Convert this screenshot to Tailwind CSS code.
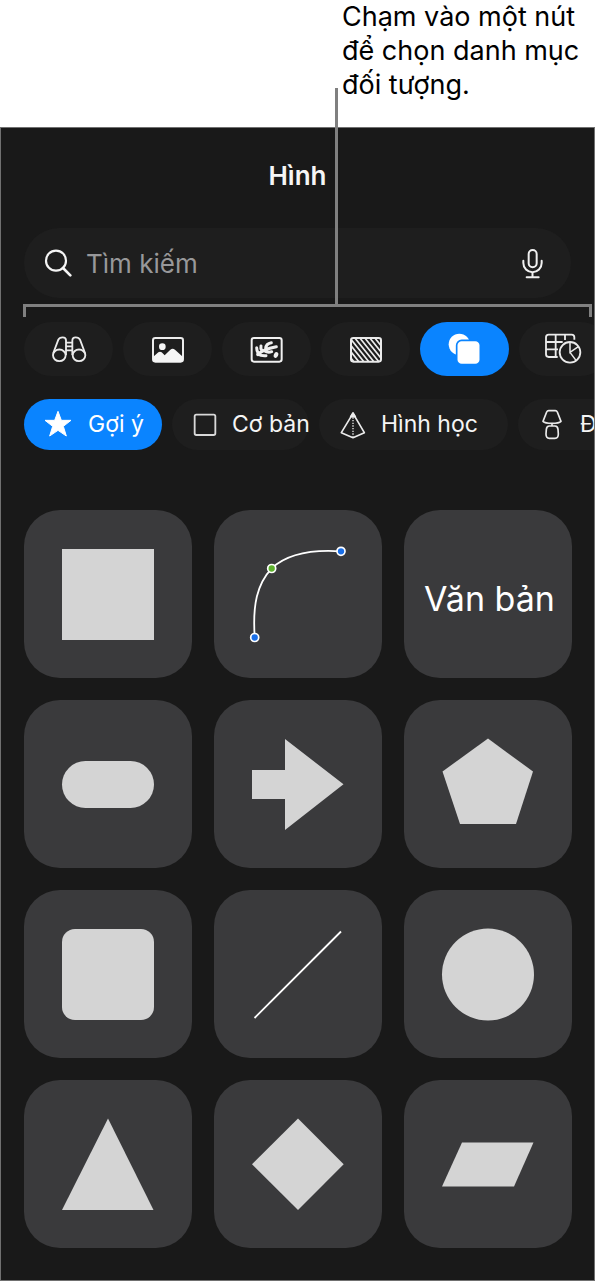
<!DOCTYPE html>
<html lang="vi">
<head>
<meta charset="utf-8">
<meta name="viewport" content="width=device-width, initial-scale=1">
<title>Hình</title>
<script src="https://cdn.jsdelivr.net/npm/@tailwindcss/browser@4"></script>
</head>
<body class="bg-white font-['Inter','Noto_Sans',sans-serif] text-[#f5f5f5]">
<div class="relative pb-px">
  <p class="mb-[25px] pl-[342px] text-[27px] leading-[34px] text-black whitespace-nowrap">Chạm vào một nút<br>để chọn danh mục<br>đối tượng.</p>

  <main class="mr-px overflow-hidden border border-[#707070] bg-[#191919] pt-8 pb-8">
    <h1 class="text-center text-[26px] leading-8 font-semibold">Hình</h1>

    <div class="mx-[23px] mt-9 flex h-[70px] items-center gap-[14px] rounded-full bg-[#1e1e1e] pr-[25px] pl-5">
      <svg class="h-8 w-7 shrink-0" viewBox="132 79 84 96" fill="none" stroke="#f5f5f5" aria-hidden="true"><circle cx="168" cy="120" r="30" stroke-width="6.500"/><path d="M189 142l22 22" stroke-width="8" stroke-linecap="round"/></svg>
      <input type="search" aria-label="Tìm kiếm" placeholder="Tìm kiếm" class="min-w-0 flex-1 bg-transparent pt-px text-[26px] leading-8 outline-none placeholder:text-[#98989a]">
      <button type="button" aria-label="Đọc chính tả" class="shrink-0">
        <svg class="block h-8 w-7" viewBox="665 80 84 96" fill="none" stroke="#f0f0f0" stroke-width="6" stroke-linecap="round" aria-hidden="true"><rect x="697" y="89" width="24" height="52" rx="12"/><path d="M681 121v7a27.500 27.500 0 0 0 55 0v-7M708.500 156v14M691 171h36"/></svg>
      </button>
    </div>

    <nav aria-label="Danh mục đối tượng" class="mt-6 ml-[23px] flex gap-[10px]">
      <button type="button" aria-label="Tất cả" class="flex h-[54px] w-[89px] shrink-0 items-center justify-center rounded-full bg-[#1e1e1e]">
        <svg class="h-8 w-10" viewBox="98 55 120 96" fill="none" stroke="#ebebeb" stroke-width="5.500" aria-hidden="true"><ellipse cx="129" cy="122" rx="19" ry="17.500"/><ellipse cx="188" cy="122" rx="19" ry="17.500"/><path d="M111 115l15-40q3-7 13-7 10 0 10 9v44M206 115l-15-40q-3-7-13-7-10 0-10 9v44M149 84h19M149 95h19M149 107h19"/></svg>
      </button>
      <button type="button" aria-label="Ảnh" class="flex h-[54px] w-[89px] shrink-0 items-center justify-center rounded-full bg-[#1e1e1e]">
        <svg class="h-8 w-10" viewBox="394 55 120 96" aria-hidden="true"><rect x="409" y="70" width="90" height="71" rx="7" fill="none" stroke="#ebebeb" stroke-width="6"/><circle cx="437" cy="96" r="10" fill="#f5f5f5"/><path fill="#f5f5f5" d="M409 127l16-14q5-4 10 0l9 9 17-17q7-6 14 0l24 22v9q0 6-7 6h-76q-7 0-7-6z"/></svg>
      </button>
      <button type="button" aria-label="Minh họa" class="flex h-[54px] w-[89px] shrink-0 items-center justify-center rounded-full bg-[#1e1e1e]">
        <svg class="h-8 w-10" viewBox="110 55 120 96" fill="none" stroke="#f0f0f0" stroke-linecap="round" aria-hidden="true"><rect x="124" y="70" width="90" height="71" rx="7" stroke-width="6"/><path stroke-width="9" d="M142 120q14-16 56-24M142 118q10 6 25 5M143 114q-4-7-4-15M155 108q-5-7-3-14M166 101q1-14 17-17M162 108q10 7 22 3"/><ellipse cx="197" cy="121" rx="6.500" ry="9" transform="rotate(22 197 121)" fill="#f0f0f0" stroke="none"/></svg>
      </button>
      <button type="button" aria-label="Hoa văn" class="flex h-[54px] w-[89px] shrink-0 items-center justify-center rounded-full bg-[#1e1e1e]">
        <svg class="h-8 w-10" viewBox="406 55 120 96" fill="none" stroke="#ebebeb" aria-hidden="true"><clipPath id="hatch"><rect x="421" y="70" width="90" height="71" rx="7"/></clipPath><rect x="421" y="70" width="90" height="71" rx="7" stroke-width="6"/><path clip-path="url(#hatch)" stroke-width="5" d="M371 68l64 80M386 68l64 80M401 68l64 80M416 68l64 80M431 68l64 80M446 68l64 80M461 68l64 80M476 68l64 80M491 68l64 80"/></svg>
      </button>
      <button type="button" aria-label="Hình" aria-pressed="true" class="flex h-[54px] w-[89px] shrink-0 items-center justify-center rounded-full bg-[#0a84ff]">
        <svg class="h-8 w-10" viewBox="134 55 120 96" fill="#fff" aria-hidden="true"><circle cx="177" cy="89" r="32"/><rect x="169" y="77" width="71" height="73" rx="15" stroke="#0a84ff" stroke-width="5"/></svg>
      </button>
      <button type="button" aria-label="Bảng và biểu đồ" class="flex h-[54px] w-[89px] shrink-0 items-center justify-center rounded-full bg-[#1e1e1e]">
        <svg class="h-8 w-10" viewBox="432 55 120 96" fill="none" stroke="#ebebeb" stroke-width="5.500" aria-hidden="true"><path d="M523 75v-7q0-8-8-8h-69q-8 0-8 8v51q0 8 8 8h27M438 82h50M438 104h36M467 60v67M495 60v16"/><circle cx="510" cy="113" r="31"/><path d="M510 82v31l25-17M510 113l18 24" stroke-width="4.500"/></svg>
      </button>
    </nav>

    <nav aria-label="Nhóm hình" class="mt-[23px] ml-[23px] flex gap-[10px] text-[23px] whitespace-nowrap">
      <button type="button" aria-pressed="true" class="flex h-[51px] w-[138px] shrink-0 items-center gap-4 rounded-full bg-[#0a84ff] pl-5 text-white">
        <svg class="h-8 w-7 shrink-0" viewBox="85 55 84 96" fill="#fff" stroke="#fff" stroke-width="3" stroke-linejoin="round" aria-hidden="true"><path d="M127 62l10 27h29l-23 18 9 29-25-17-25 17 9-29-23-18h29z"/></svg>Gợi ý
      </button>
      <button type="button" class="flex h-[51px] w-[137px] shrink-0 items-center gap-3 rounded-full bg-[#1e1e1e] pl-5">
        <svg class="h-8 w-7 shrink-0" viewBox="528 55 84 96" fill="none" stroke="#d8d8d8" stroke-width="5.500" aria-hidden="true"><rect x="536" y="72" width="62" height="61" rx="5"/></svg>Cơ bản
      </button>
      <button type="button" class="flex h-[51px] w-[189px] shrink-0 items-center gap-[14px] rounded-full bg-[#1e1e1e] pl-5">
        <svg class="h-8 w-7 shrink-0" viewBox="118 55 84 96" fill="none" stroke="#ebebeb" stroke-width="5" stroke-linejoin="round" aria-hidden="true"><path d="M160 68l34 58-34 15-35-15z"/><path d="M160 67l7 11h-14z" fill="#ebebeb"/><path d="M160 80v58" stroke-width="4" stroke-dasharray="4 4"/></svg>Hình học
      </button>
      <button type="button" class="flex h-[51px] w-[189px] shrink-0 items-center gap-[14px] rounded-full bg-[#1e1e1e] pl-5">
        <svg class="h-8 w-7 shrink-0" viewBox="714 55 84 96" fill="none" stroke="#ebebeb" stroke-width="5" stroke-linejoin="round" aria-hidden="true"><path d="M746 60h20q4 0 6 4l11 28q-6 6-27 6t-27-6l11-28q2-4 6-4zM748 106h17q8 0 9 10l1 14q0 13-10 13h-17q-10 0-10-13l1-14q1-10 9-10zM756 98v8"/></svg>Đồ vật
      </button>
    </nav>

    <section aria-label="Gợi ý" class="mr-[22px] ml-[23px] mt-[60px] grid grid-cols-3 gap-[22px]">
      <button type="button" aria-label="Hình vuông" class="aspect-square rounded-[36px] bg-[#3a3a3c]"><svg class="size-full" viewBox="0 0 168 168" fill="#d4d4d4"><path d="M38 39h92v91H38z"/></svg></button>
      <button type="button" aria-label="Vẽ đường cong" class="aspect-square rounded-[36px] bg-[#3a3a3c]"><svg class="size-full" viewBox="0 0 168 168"><path d="M40.700 127.300C38.500 95 43 74 57.700 58.300C74 43 100 39.500 127 41.300" fill="none" stroke="#fff" stroke-width="1.800"/><g stroke="#fff" stroke-width="1.700"><circle cx="40.700" cy="127.500" r="4" fill="#1a6fe8"/><circle cx="57.700" cy="58.500" r="4" fill="#5eb22e"/><circle cx="127" cy="41.300" r="4" fill="#1a6fe8"/></g></svg></button>
      <button type="button" class="flex aspect-square items-center justify-center rounded-[36px] bg-[#3a3a3c] pt-[10px] pl-[3px] text-[34px] leading-10 whitespace-nowrap text-white">Văn bản</button>
      <button type="button" aria-label="Hình viên thuốc" class="aspect-square rounded-[36px] bg-[#3a3a3c]"><svg class="size-full" viewBox="0 0 168 168" fill="#d4d4d4"><rect x="38" y="61" width="92" height="47" rx="23.500"/></svg></button>
      <button type="button" aria-label="Mũi tên" class="aspect-square rounded-[36px] bg-[#3a3a3c]"><svg class="size-full" viewBox="0 0 168 168" fill="#d4d4d4"><path d="M38 70h33V39l58.500 45.300L71 130V99H38z"/></svg></button>
      <button type="button" aria-label="Ngũ giác" class="aspect-square rounded-[36px] bg-[#3a3a3c]"><svg class="size-full" viewBox="0 0 168 168" fill="#d4d4d4"><path d="M84 38.500L129 71.500 112 124H56L38.500 71.500z"/></svg></button>
      <button type="button" aria-label="Hình vuông bo góc" class="aspect-square rounded-[36px] bg-[#3a3a3c]"><svg class="size-full" viewBox="0 0 168 168" fill="#d4d4d4"><rect x="38" y="39" width="92" height="91" rx="13"/></svg></button>
      <button type="button" aria-label="Đường thẳng" class="aspect-square rounded-[36px] bg-[#3a3a3c]"><svg class="size-full" viewBox="0 0 168 168"><path d="M40.500 128L127 41.500" stroke="#fff" stroke-width="1.800"/></svg></button>
      <button type="button" aria-label="Hình tròn" class="aspect-square rounded-[36px] bg-[#3a3a3c]"><svg class="size-full" viewBox="0 0 168 168" fill="#d4d4d4"><circle cx="84" cy="84.500" r="46"/></svg></button>
      <button type="button" aria-label="Tam giác" class="aspect-square rounded-[36px] bg-[#3a3a3c]"><svg class="size-full" viewBox="0 0 168 168" fill="#d4d4d4"><path d="M84 38.500L129.500 130H38z"/></svg></button>
      <button type="button" aria-label="Hình thoi" class="aspect-square rounded-[36px] bg-[#3a3a3c]"><svg class="size-full" viewBox="0 0 168 168" fill="#d4d4d4"><path d="M84 38.500L129.700 84.300 84 130 38 84.300z"/></svg></button>
      <button type="button" aria-label="Hình bình hành" class="aspect-square rounded-[36px] bg-[#3a3a3c]"><svg class="size-full" viewBox="0 0 168 168" fill="#d4d4d4"><path d="M58 62.500H129.500L110 106.500H38z"/></svg></button>
    </section>
  </main>

  <!-- callout: stem and bracket over the category row -->
  <div class="pointer-events-none absolute top-[88px] left-[335px] h-[217px] w-[3px] bg-[#808080]"></div>
  <div class="pointer-events-none absolute top-[304px] right-1 left-[23px] h-[13px] border-x-3 border-t-3 border-[#808080]"></div>
</div>
</body>
</html>
